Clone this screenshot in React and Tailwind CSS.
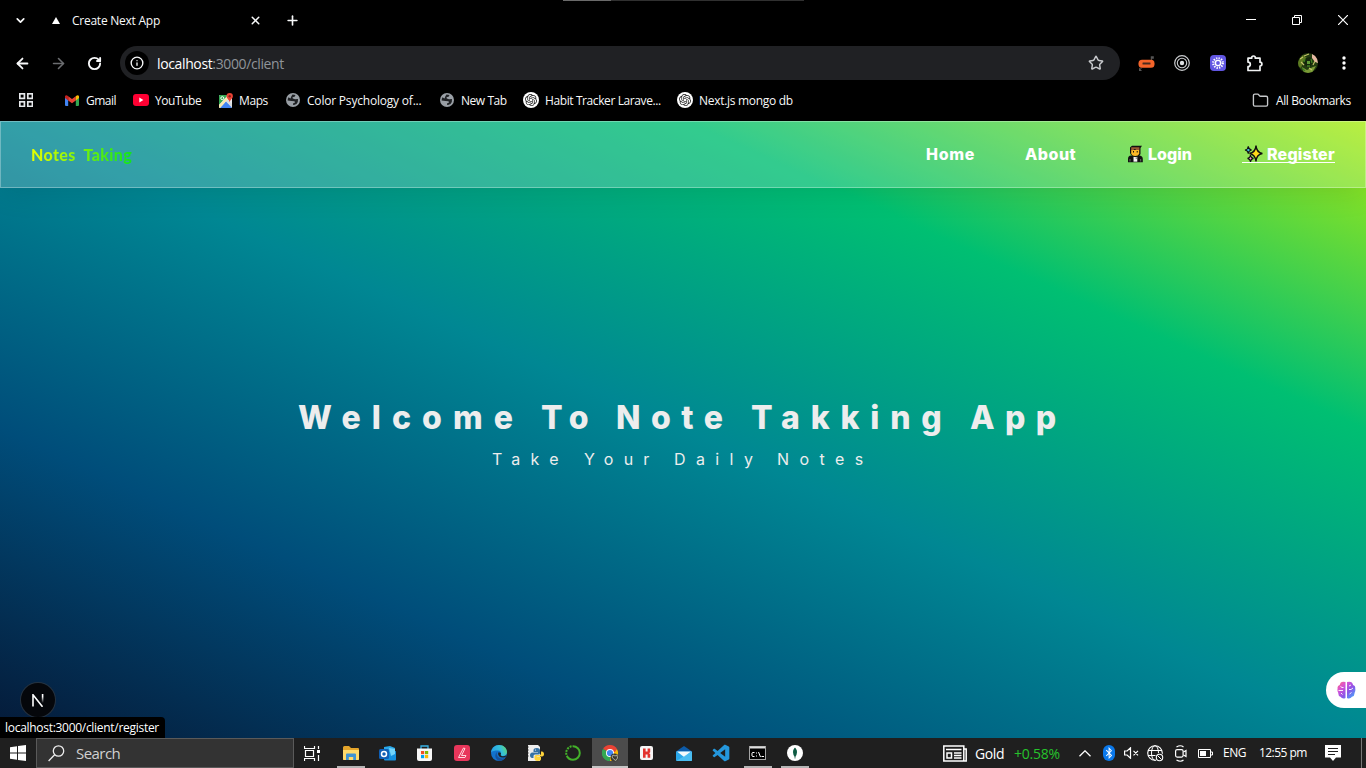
import React from "react";
import { ArrowLeft, ArrowRight, RotateCw, ChevronDown, ChevronUp, X, Plus, Star, Folder, Info } from "lucide-react";
import { SiOpenai } from "react-icons/si";
import { BiLogoVisualStudio } from "react-icons/bi";
import { FaBluetoothB } from "react-icons/fa";

const Svg = ({ w = 16, h = 16, vb, className = "", children }) => (
  <svg width={w} height={h} viewBox={vb || `0 0 ${w} ${h}`} fill="none" className={`shrink-0 ${className}`}>
    {children}
  </svg>
);

const Slot = ({ className = "", children }) => (
  <div className={`flex shrink-0 items-center justify-center ${className}`}>{children}</div>
);

const Apps = () => (
  <Svg w={14} h={14}>
    {[[1, 1], [9, 1], [1, 9], [9, 9]].map(([x, y]) => (
      <rect key={`${x}${y}`} x={x - 0.2} y={y - 0.2} width="4.6" height="4.6" stroke="#e8eaed" strokeWidth="1.7" />
    ))}
  </Svg>
);

const Gmail = () => (
  <Svg w={14} h={11}>
    <path d="M0 1.5V10a1 1 0 0 0 1 1h2.2V3z" fill="#4285f4" />
    <path d="M14 1.5V10a1 1 0 0 1-1 1h-2.2V3z" fill="#34a853" />
    <path d="M3.2 5.5V1.2L7 4l3.8-2.8v4.3L7 8.3z" fill="#ea4335" />
    <path d="M0 1.6C0 .2 1.5-.4 2.6.7l.6.5v4.3L0 3.1z" fill="#c5221f" />
    <path d="M14 1.6c0-1.4-1.5-2-2.6-.9l-.6.5v4.3L14 3.1z" fill="#fbbc04" />
  </Svg>
);

const YouTube = () => (
  <Svg w={16} h={12}>
    <rect width="16" height="12" rx="3" fill="#ff0033" />
    <path d="M6.3 3.6v4.8L10.4 6z" fill="#fff" />
  </Svg>
);

const Maps = () => (
  <Svg w={14} h={15}>
    <rect x="0" y="2" width="13" height="13" rx="1.3" fill="#e8eaed" />
    <path d="M0 3.3Q0 2 1.3 2H9L0 12z" fill="#34a853" />
    <path d="M1 15 7 8.2l5.8 6.1-.8.7z" fill="#4285f4" />
    <path d="M0 12 8.8 3l1.5 1.8L1 15q-1 0-1-1z" fill="#fbe9b0" />
    <path d="M7 8.5 12.8 14.5 13 11 9 7z" fill="#dadce0" />
    <circle cx="3.3" cy="5.2" r="1.5" stroke="#fff" />
    <path d="M10.7 0a3.2 3.2 0 0 1 3.2 3.2c0 2.3-2.5 3-3.2 6-.7-3-3.2-3.7-3.2-6A3.2 3.2 0 0 1 10.7 0" fill="#ea4335" />
    <circle cx="10.7" cy="3.3" r="1.2" fill="#8c1d18" />
  </Svg>
);

const GrayGlobe = () => (
  <Svg w={14} h={14}>
    <circle cx="7" cy="7" r="7" fill="#9aa0a6" />
    <path d="M6.500 1.600 9.500 2 8.600 3.800 6.500 4.300 6.800 5.600 9 6.200 12 6Q12.400 9 10.500 10.900L8 12 7 11.800 7 10.500 9 9.500 8.500 8.300 5.500 8 1.600 7.400Q1.600 5.500 2.500 4.200L4.500 5.500 5.500 3z" fill="#202225" />
  </Svg>
);

const Gpt = () => (
  <div className="flex h-4 w-4 shrink-0 items-center justify-center rounded-full bg-white text-[#222]">
    <SiOpenai size={12} />
  </div>
);

const Extension1 = () => (
  <Svg w={17} h={17}>
    <path d="M13.500 5V2.500M3 12.500V14" stroke="#4a4a4a" strokeWidth="1.200" />
    <path d="M12.800 1.200h3v2.500h-3zM1 16v-3.500L4 16z" fill="#555" />
    <rect x=".5" y="4.800" width="16" height="8" rx="3.500" fill="#f4642a" />
    <rect x="4.500" y="7.500" width="8" height="2" rx=".5" fill="#4a2a1e" />
  </Svg>
);

const Extension2 = () => (
  <Svg w={16} h={16}>
    <circle cx="8" cy="8" r="7.3" stroke="#c9cbce" strokeWidth="1.2" />
    <circle cx="8" cy="8" r="4.7" stroke="#c9cbce" strokeWidth="1.1" />
    <circle cx="8" cy="8" r="2.2" fill="#dfe1e4" />
  </Svg>
);

const Extension3 = () => (
  <Svg w={16} h={16}>
    <rect width="16" height="16" rx="4" fill="#6257e3" />
    <circle cx="8" cy="8" r="2.6" stroke="#fff" strokeWidth="1.4" />
    <circle cx="8" cy="8" r="4.8" stroke="#fff" strokeWidth="2.2" strokeDasharray="1.3 1.21" />
  </Svg>
);

const Puzzle = () => (
  <Svg w={17} h={17}>
    <path d="M2 3.200h3.700v-.4a1.800 1.800 0 0 1 3.600 0v.4H14v4a1.900 1.900 0 0 1 0 3.800v4.500H2v-3.800a2.300 2.300 0 0 0 0-4.600z" stroke="#f1f3f4" strokeWidth="1.700" strokeLinejoin="round" />
  </Svg>
);

const Avatar = () => (
  <Svg w={20} h={20}>
    <clipPath id="avatar"><circle cx="10" cy="10" r="10" /></clipPath>
    <g clipPath="url(#avatar)">
      <rect width="20" height="20" fill="#233b10" />
      <path d="M0 8 5 2 9 5 5 10 3 15 0 13z" fill="#5d7a20" />
      <path d="M14 1 20 3v7l-3-1-3-4z" fill="#e6b8a3" />
      <path d="M4 14 9 17 15 14 18 13 14 20H6z" fill="#7a9a36" />
      <path d="M8 5 12 4 15 9 12 14 8 13 5 9z" fill="#14260b" />
      <path d="M9 8h3v3H9z" fill="#5f9a35" />
      <path d="M6 3 11 1M3 9 6 12M15 12l2-4M11 15l3 2M2 6l3-2" stroke="#c6c46b" strokeWidth="1.1" />
      <path d="M7 6 6 9M13 6l1 4M9 13h3M4 15l3 3" stroke="#3f7d22" strokeWidth="1.3" />
    </g>
  </Svg>
);

const Bookmark = ({ icon, label, gap, textClass }) => (
  <div className={`flex shrink-0 items-center ${gap}`}>
    {icon}
    <span className={`whitespace-nowrap pt-px ${textClass}`}>{label}</span>
  </div>
);

function Chrome() {
  return (
    <header className="flex h-[121px] shrink-0 flex-col bg-black text-[12px] text-[#f8f9fa]">
      <div className="relative flex h-10 items-center">
        <div className="absolute left-[563px] top-0 flex h-px w-[241px] bg-[#303030]"><div className="w-12 bg-[#6a6a6a]" /></div>
        <Slot className="w-10"><ChevronDown size={13} strokeWidth={3.2} /></Slot>
        <Slot className="w-8">
          <Svg w={8} h={7}><path d="M4 0 8 7H0z" fill="#fff" /></Svg>
        </Slot>
        <span className="w-[171px] whitespace-nowrap pt-px tracking-[-0.25px]">Create Next App</span>
        <Slot className="w-6"><X size={13} strokeWidth={2.800} /></Slot>
        <Slot className="ml-[13px] w-6"><Plus size={15} strokeWidth={2.600} /></Slot>
        <div className="ml-auto flex">
          <Slot className="w-[46px]"><Svg w={10} h={10}><path d="M0 4.5h10" stroke="#fff" /></Svg></Slot>
          <Slot className="w-[46px]">
            <Svg w={10} h={10}><path d="M.5 2.5h7v7h-7zM2.5 2.5v-2h7v7h-2" stroke="#fff" /></Svg>
          </Slot>
          <Slot className="w-[46px]"><Svg w={10} h={10}><path d="m0 0 10 10M10 0 0 10" stroke="#fff" strokeWidth="1.2" /></Svg></Slot>
        </div>
      </div>
      <div className="flex h-[46px] items-center pl-1">
        <Slot className="w-9"><ArrowLeft size={17} strokeWidth={2.5} /></Slot>
        <Slot className="w-9 text-[#6b6d70]"><ArrowRight size={17} strokeWidth={2.3} /></Slot>
        <Slot className="w-9"><RotateCw size={15} strokeWidth={3} /></Slot>
        <div className="ml-2 flex h-[34px] w-[1000px] items-center rounded-full bg-[#202124] pl-[5px] pr-4">
          <Slot className="h-6 w-6 rounded-full bg-black"><Info size={14} strokeWidth={2.3} /></Slot>
          <span className="ml-2 whitespace-nowrap text-[14px] tracking-[-0.37px] text-[#8f9499]"><span className="text-white">localhost</span>:3000/client</span>
          <Star size={16} strokeWidth={2.2} className="ml-auto text-[#c7c9cc]" />
        </div>
        <Slot className="ml-2 w-9"><Extension1 /></Slot>
        <Slot className="w-9"><Extension2 /></Slot>
        <Slot className="w-9"><Extension3 /></Slot>
        <Slot className="w-9"><Puzzle /></Slot>
        <Slot className="ml-[18px] w-9"><Avatar /></Slot>
        <Slot className="w-9">
          <Svg w={4} h={14}><circle cx="2" cy="2" r="1.7" fill="#fff" /><circle cx="2" cy="7" r="1.7" fill="#fff" /><circle cx="2" cy="12" r="1.7" fill="#fff" /></Svg>
        </Slot>
      </div>
      <div className="flex h-7 items-center pl-[19px] pr-[14px]">
        <Apps />
        <div className="ml-8 flex items-center">
          <Bookmark icon={<Gmail />} label="Gmail" gap="gap-[7px]" textClass="w-[47px] tracking-[-0.5px]" />
          <Bookmark icon={<YouTube />} label="YouTube" gap="gap-[6px]" textClass="w-[64px] tracking-[-0.45px]" />
          <Bookmark icon={<Maps />} label="Maps" gap="gap-[6px]" textClass="w-[47px] tracking-[-0.4px]" />
          <Bookmark icon={<GrayGlobe />} label="Color Psychology of..." gap="gap-[7px]" textClass="w-[133px] tracking-[-0.2px]" />
          <Bookmark icon={<GrayGlobe />} label="New Tab" gap="gap-[7px]" textClass="w-[62px] tracking-[-0.45px]" />
          <Bookmark icon={<Gpt />} label="Habit Tracker Larave..." gap="gap-[6px]" textClass="w-[132px] tracking-[-0.4px]" />
          <Bookmark icon={<Gpt />} label="Next.js mongo db" gap="gap-[6px]" textClass="tracking-[-0.3px]" />
        </div>
        <div className="ml-auto flex items-center gap-[7px]">
          <Folder size={17} strokeWidth={1.9} className="text-[#c7c9cc]" />
          <span className="w-[76px] whitespace-nowrap pt-px tracking-[-0.4px]">All Bookmarks</span>
        </div>
      </div>
    </header>
  );
}

const Office = () => (
  <Svg w={15} h={18}>
    <path d="M2 8V2.5L4 .7h10L12.5 3v6q-1 3-5 3T2 8z" fill="#111" />
    <path d="M3.2 5h8v3.5q-.7 2.5-4 2.5t-4-2.5z" fill="#fcb827" />
    <path d="M3.2 2.2h8.2V5H8L7 3.8 5 5.2H3.2z" fill="#9b5a32" />
    <path d="M5 6h1v1.6H5zM8.7 6h1v1.6h-1z" fill="#111" />
    <path d="M0 17.3V14q0-3 3-3.4L7.3 12l4.5-1.4q3 .6 3 3.4v3.3z" fill="#111" />
    <path d="M5.5 12h3.8v4.7H5.5z" fill="#f4f4f4" />
    <path d="m7.4 13 1.2-.7v1.8z" fill="#333" />
    <path d="M2 14v2.5M12.7 14v2.5" stroke="#666" />
  </Svg>
);

const Sparkles = () => (
  <Svg w={19} h={18}>
    <path d="M12 .6q.5 6.8 6.400 7.900-6 1-6.400 8-.7-7-6.500-8Q11.500 7.500 12 .6z" fill="#ffd91a" stroke="#101010" strokeWidth="1.4" />
    <path d="M4.300 1.200q.2 3.200 3.300 3.800-3 .5-3.300 3.600Q4 5.600 1 5q3-.5 3.300-3.800z" fill="#3fc9f4" stroke="#101010" strokeWidth="1.1" />
    <path d="M6.500 10q.3 3 3 3.400-2.700.6-3 3.500-.4-3-3-3.500Q6.200 13 6.500 10z" fill="#f59ad0" stroke="#101010" strokeWidth="1.1" />
  </Svg>
);

const Brain = () => (
  <Svg w={19} h={18}>
    <defs>
      <linearGradient id="brain" x1="0" y1="0" x2="1" y2="1">
        <stop offset="0" stopColor="#ff6a7e" /><stop offset=".3" stopColor="#d651d6" /><stop offset=".6" stopColor="#8a56e8" /><stop offset="1" stopColor="#38b6ff" />
      </linearGradient>
    </defs>
    <path d="M8.500 1v16q-3 1.500-5-1.300Q1 15 1.300 12 0 10 .6 7.500 0 5 2.700 4 3.500-.5 8.500 1zM10 1v16q3 1.500 5-1.300 2.800-.7 2.500-3.700 1.300-2 .7-4.500.6-2.500-2.100-3.500-.8-4.500-6.100-3z" fill="url(#brain)" />
    <path d="M3.500 5.500 5 6.500h1.500M1.500 9.500h4.500M4 12l1.500 1.500M12 5l2-1M12 8.500h2l2-1.500M12.500 13l2-1.500" stroke="#fff" strokeWidth=".9" />
  </Svg>
);

function Page() {
  return (
    <main className="relative flex h-[617px] shrink-0 flex-col bg-[linear-gradient(to_right_top,#051937,#004d7a,#008793,#00bf72,#a8eb12)] font-['Inter',sans-serif]">
      <nav className="flex h-[67px] shrink-0 items-center border border-white/30 bg-white/20 pl-[30px] shadow-[0_4px_30px_rgba(0,0,0,0.1)]">
        <span className="bg-[linear-gradient(to_right,#e5ff00,#10e51b)] bg-clip-text font-['Lato',sans-serif] text-[16px] font-black tracking-[0.35px] text-transparent">Notes&nbsp; Taking</span>
        <div className="ml-auto flex items-center pb-[2px] text-[16px] font-extrabold text-white">
          <span className="w-[99px] tracking-[0.7px]">Home</span>
          <span className="w-[102px] tracking-[0.5px]">About</span>
          <span className="flex w-[116px] items-center gap-[4px] tracking-[0px]"><Slot className="w-[17px]"><Office /></Slot>Login</span>
          <span className="relative flex w-[122px] items-center gap-[4px] tracking-[0.2px]">
            <Slot className="w-5"><Sparkles /></Slot>Register
            <span className="absolute bottom-[3px] left-[-1px] h-px w-[93px] bg-white" />
          </span>
        </div>
      </nav>
      <h1 className="ml-[298px] mt-[206px] flex h-12 items-center whitespace-nowrap text-[32px] font-extrabold text-[#ededed]">
        <span className="w-[243px] tracking-[11.1px]">Welcome</span>
        <span className="w-[75px] tracking-[8.500px]">To</span>
        <span className="w-[135px] tracking-[10.5px]">Note</span>
        <span className="w-[219px] tracking-[10.800px]">Takking</span>
        <span className="tracking-[10.400px]">App</span>
      </h1>
      <p className="ml-[492px] mt-[5px] flex h-6 items-center whitespace-nowrap text-[16px] text-[#ededed]">
        <span className="w-[92px] tracking-[10.2px]">Take</span>
        <span className="w-[90px] tracking-[10.2px]">Your</span>
        <span className="w-[103px] tracking-[10.400px]">Daily</span>
        <span className="tracking-[10.400px]">Notes</span>
      </p>
      <div className="absolute left-[21px] top-[562px] flex h-[34px] w-[34px] items-center justify-center rounded-full bg-[#05070b] shadow-[0_0_0_1px_rgba(60,60,60,0.6)]">
        <Svg w={12} h={13}>
          <defs><linearGradient id="fade" x1="0" y1="0" x2="0" y2="1"><stop offset=".3" stopColor="#fff" /><stop offset="1" stopColor="#fff" stopOpacity="0" /></linearGradient></defs>
          <path d="M1 12.500V.8l9.500 12" stroke="#fff" strokeWidth="1.6" />
          <rect x="9.800" y="0" width="1.600" height="9" fill="url(#fade)" />
        </Svg>
      </div>
      <div className="absolute bottom-0 left-0 h-[21px] w-[165px] whitespace-nowrap rounded-tr bg-black pl-[5px] font-['Open_Sans',sans-serif] text-[12px] leading-[22px] tracking-[-0.29px] text-white">localhost:3000/client/register</div>
      <div className="absolute right-0 top-[551px] flex h-9 w-10 items-center justify-center rounded-l-full bg-white"><Brain /></div>
    </main>
  );
}

const icons = [
  {
    id: "explorer", open: true, el: (
      <Svg w={16} h={14}>
        <path d="M0 1.500Q0 0 1.500 0H6l2 2h7q1 0 1 1v10q0 1-1 1H1q-1 0-1-1z" fill="#e5a52b" />
        <path d="M0 4h16v9q0 1-1 1H1q-1 0-1-1z" fill="#ffda6b" />
        <path d="M3 14V8.500Q3 7.500 4 7.500h8q1 0 1 1V14h-2.800v-3H5.800v3z" fill="#3f93d3" />
      </Svg>),
  },
  {
    id: "outlook", el: (
      <Svg w={17} h={15}>
        <path d="M5 1 11 0l5 2v6l-5 4-6-3z" fill="#28a8ea" />
        <path d="m5 8 6-2 6-1v8.500q0 1-1 1H6q-1 0-1-1z" fill="#1490df" />
        <path d="m10 2 6 1v5l-4 2z" fill="#71d3fa" />
        <rect y="3" width="10" height="10" rx="1.500" fill="#0f5fb5" />
        <circle cx="5" cy="8" r="2.500" stroke="#fff" strokeWidth="1.500" />
      </Svg>),
  },
  {
    id: "store", el: (
      <Svg w={15} h={16}>
        <path d="M4 4V1h7v3" stroke="#39b4e8" strokeWidth="1.300" />
        <path d="M0 3.500h15V14q0 2-2 2H2q-2 0-2-2z" fill="#f7f7f7" />
        <path d="M4 6h3.200v3.200H4z" fill="#f25022" /><path d="M8 6h3.200v3.200H8z" fill="#7fba00" />
        <path d="M4 10h3.200v3.200H4z" fill="#00a4ef" /><path d="M8 10h3.200v3.200H8z" fill="#ffb900" />
      </Svg>),
  },
  {
    id: "laragon", el: (
      <Svg w={16} h={16}>
        <rect width="16" height="16" rx="3" fill="#e8365b" />
        <path d="M9.500 3 11 3.500 7.500 10.500H12L11 12.500H4.500z" stroke="#ffd5dd" strokeLinejoin="round" />
      </Svg>),
  },
  {
    id: "edge", el: (
      <Svg w={16} h={16}>
        <defs><linearGradient id="edge" x1="0" y1=".5" x2="1" y2=".2"><stop stopColor="#279fe8" /><stop offset=".6" stopColor="#35c1d8" /><stop offset="1" stopColor="#65d66b" /></linearGradient></defs>
        <circle cx="8" cy="8" r="8" fill="#1272cc" />
        <path d="M0 7.500C.5 3 4 0 8 0c5 0 8 3.500 8 7 0 2.500-2 4-4.500 4-2 0-2.500-1-1.600-2 .7-1.300-.4-3.500-3-3.500C4 5.500 1 6 0 7.500z" fill="url(#edge)" />
        <path d="M6.500 6.500C4.500 9 6.500 14 12 13.500l2.500-1.200C13 15 10 16 8 16 4 14 3 9.500 6.500 6.500z" fill="#16509c" />
        <path d="M7.500 7.300Q6.300 9 8 11.300q2.500 2 6.500.7l1-1.700Q13 12 10.500 11 9 10 9.900 9q.4-1.700-2.400-1.700z" fill="#1f1f1f" />
      </Svg>),
  },
  {
    id: "python", el: (
      <Svg w={17} h={16}>
        <path d="M1 0h10l2 2v14H1z" fill="#eee" /><path d="M1 2h1M1 5h1M1 8h1M1 11h1" stroke="#777" />
        <path d="M10 3c-3 0-3.500 1-3.500 2.500V7H11v.6H5.500C3.500 7.600 3 9 3 10.500S4 13 5 13h1.500v-2q0-1.500 1.500-1.500h3.500Q13 9.500 13 8V5.500C13 4 12 3 10 3z" fill="#3572a5" />
        <path d="M10.500 16c3 0 3.500-1 3.500-2.300V12H9.800v-.6H15c1.500 0 2-1 2-2.400S16 6.500 15 6.500h-1v2q0 1.500-1.500 1.500H9q-1.500 0-1.500 1.500v2C7.500 15 8.500 16 10.500 16z" fill="#ffd43b" />
        <circle cx="8.500" cy="5" r=".6" fill="#fff" />
      </Svg>),
  },
  {
    id: "anaconda", el: (
      <Svg w={16} h={16}>
        <circle cx="8" cy="8" r="6.800" stroke="#43b02a" strokeWidth="2" strokeDasharray="29 1 2 1 2 1 2 1 2 1" transform="rotate(-90 8 8)" />
      </Svg>),
  },
  {
    id: "chrome", active: true, el: (
      <Svg w={17} h={17}>
        <path d="M8 8 1.070 4A8 8 0 0 1 14.930 4z" fill="#ea4335" />
        <path d="M8 8h0L14.930 4A8 8 0 0 1 8 16z" fill="#fbbc04" />
        <path d="M8 8v8A8 8 0 0 1 1.070 4z" fill="#34a853" />
        <path d="M8 4h6.930L13 7H8z" fill="#ea4335" />
        <path d="m1.070 4 3.500 6L8 12l-1 4A8 8 0 0 1 1.070 4" fill="#34a853" />
        <circle cx="8" cy="8" r="4" fill="#fff" /><circle cx="8" cy="8" r="3.100" fill="#4285f4" />
        <circle cx="12.500" cy="12.500" r="4" fill="#3a3a32" />
        <path d="m10 12 1-2 2 1 2-1 .5 3-1.500 2.500-2-1z" stroke="#c5c5b5" strokeWidth=".8" />
      </Svg>),
  },
  {
    id: "h", el: (
      <Svg w={13} h={14}>
        <rect width="13" height="14" rx="2" fill="#f6f6f6" />
        <path d="M3 2.500h2.600v3h2v-3h2.600v3.800L9 7.200l1.200.8v3.800H7.600V8.500h-2v3.300H3z" fill="#e3342f" />
      </Svg>),
  },
  {
    id: "mail", el: (
      <Svg w={16} h={15}>
        <path d="M0 5.500 8 0l8 5.500V8H0z" fill="#0d5ba8" />
        <path d="M0 5.500h16V14q0 1-1 1H1q-1 0-1-1z" fill="#2aa7ea" />
        <path d="M1 5.500h14L8 11z" fill="#f5fafc" />
        <path d="m0 15 16-9.500V15z" fill="#5cc9f5" opacity=".65" />
      </Svg>),
  },
  { id: "code", el: <BiLogoVisualStudio size={20} color="#2497dc" /> },
  {
    id: "terminal", open: true, el: (
      <Svg w={17} h={14}>
        <rect x=".5" y=".5" width="16" height="13" fill="#000" stroke="#a5a5a5" />
        <path d="M1 1.500h15" stroke="#ddd" strokeWidth="2" />
        <path d="M5.500 6.500h-2l-.5.500v3l.5.500h2M7.500 6.500v1M7.500 9.500v1M9.500 6l2 5M12.500 10.500H15" stroke="#fff" />
      </Svg>),
  },
  {
    id: "mongo", open: true, el: (
      <Svg w={16} h={16}>
        <circle cx="8" cy="8" r="8" fill="#fff" />
        <path d="M8 2.500q4.200 4.500 0 9.500-4.200-5 0-9.500z" fill="#116149" /><path d="M8 3v10.500" stroke="#0b4b37" strokeWidth=".7" />
      </Svg>),
  },
];

function Taskbar() {
  return (
    <footer className="flex h-[30px] shrink-0 items-stretch bg-[#1f1f1f] text-white">
      <Slot className="w-9">
        <Svg w={16} h={16}><path d="M0 2.300 7 1.200v6.300H0zM8 1.100 16 0v7.500H8zM0 8.500h7v6.300L0 13.700zM8 8.500h8V16l-8-1.100z" fill="#fff" /></Svg>
      </Slot>
      <div className="flex w-[258px] shrink-0 items-center border border-[#5a5a5a] bg-[#333333] pl-[11px]">
        <Svg w={17} h={17}><circle cx="10.500" cy="6" r="5.200" stroke="#eee" strokeWidth="1.300" /><path d="M6.600 9.800.6 16" stroke="#eee" strokeWidth="1.300" /></Svg>
        <span className="ml-[11px] text-[15px] tracking-[-0.55px] text-[#d0d0d0]">Search</span>
      </div>
      <Slot className="w-[37px]">
        <Svg w={17} h={15}><path d="M.5 0v2.500h10V0M.5 15v-2.500h10V15M1.500 4.500h8v6h-8zM14.500 0v3M14.500 9v6" stroke="#fff" strokeWidth="1.200" /><rect x="13" y="4" width="3" height="3" fill="#fff" /></Svg>
      </Slot>
      <div className="ml-[1px] flex">
        {icons.map((i) => (
          <div key={i.id} className={`relative flex w-[37px] items-center justify-center ${i.active ? "border-l border-[#1f1f1f] bg-[#4c4c4c]" : ""}`}>
            {i.el}
            {i.active && <div className="absolute bottom-0 left-0 h-[2px] w-full bg-[#c6c6c6]" />}
            {i.open && <div className="absolute bottom-0 left-[5px] h-[2px] w-7 bg-[#b5b5b5]" />}
          </div>
        ))}
      </div>
      <div className="ml-auto flex w-[423px] items-center text-[12px]">
        <Svg w={24} h={17}>
          <path d="M.8 1h20v15h-20zM20.800 4h2.400v12H3" stroke="#fff" strokeWidth="1.500" />
          <path d="M3 4.500h15.500M11 8h7.500M11 10.500h7.500M11 13h7.500" stroke="#fff" strokeWidth="1.300" /><path d="M4 8h4.500v5H4z" stroke="#fff" strokeWidth="1.500" />
        </Svg>
        <span className="ml-2 w-[39px] text-[14px] tracking-[-0.4px]">Gold</span>
        <span className="w-[59px] text-[14px] tracking-[-0.25px] text-[#26c32c]">+0.58%</span>
        <Slot className="w-6">
          <Svg w={12} h={7}><path d="M.5 6.300 6 .8l5.500 5.500" stroke="#fff" strokeWidth="1.300" /></Svg>
        </Slot>
        <Slot className="w-6"><div className="flex h-4 w-3 items-center justify-center rounded-[6px] bg-[#0a78ea]"><FaBluetoothB size={12} /></div></Slot>
        <Slot className="w-5">
          <Svg w={15} h={12}><path d="M.6 4h2.500L6.500.8v10.400L3.100 8H.600zM9.500 3.800l4.500 4.500M14 3.800 9.500 8.300" stroke="#fff" strokeWidth="1.200" /></Svg>
        </Slot>
        <Slot className="w-[29px]">
          <Svg w={17} h={17}><circle cx="8" cy="8" r="7.300" stroke="#fff" strokeWidth="1.100" /><ellipse cx="8" cy="8" rx="3.500" ry="7.300" stroke="#fff" /><path d="M1 5.500h14M1 10.500h9" stroke="#fff" /><circle cx="12.500" cy="12.500" r="4.500" fill="#1f1f1f" /><circle cx="12.500" cy="12.500" r="3.200" stroke="#fff" strokeWidth="1.100" /><path d="m10.500 10.500 4 4" stroke="#fff" /></Svg>
        </Slot>
        <Slot className="w-[22px]">
          <Svg w={12} h={17}><rect x=".6" y="4.600" width="7.500" height="7.500" rx="1.500" stroke="#fff" strokeWidth="1.200" /><path d="M8.500 7 11 5.500v6L8.500 10M1.500 2q4-2.500 7 0M1.500 15q4 2.500 7 0" stroke="#fff" strokeWidth="1.200" /></Svg>
        </Slot>
        <Slot className="w-[26px]">
          <Svg w={15} h={9}><path d="M.5.500h12v8H.500zM12.500 3h2v3h-2" stroke="#fff" /><path d="M2 2h6v5H2z" fill="#fff" /></Svg>
        </Slot>
        <span className="ml-[5px] w-9 tracking-[-0.5px]">ENG</span>
        <span className="w-[66px] whitespace-nowrap tracking-[-0.55px]">12:55 pm</span>
        <Svg w={16} h={16}><path d="M0 0h16v12.500h-5L8 16l-3-3.500H0z" fill="#fff" /><path d="M3 3.500h10M3 6.500h10M3 9.500h7" stroke="#1f1f1f" /></Svg>
        <div className="ml-auto mr-1 h-full w-px bg-[#777]" />
      </div>
    </footer>
  );
}

export default function App() {
  return (
    <div className="flex h-[768px] w-[1366px] flex-col overflow-hidden font-['Open_Sans',sans-serif]">
      <Chrome />
      <Page />
      <Taskbar />
    </div>
  );
}
